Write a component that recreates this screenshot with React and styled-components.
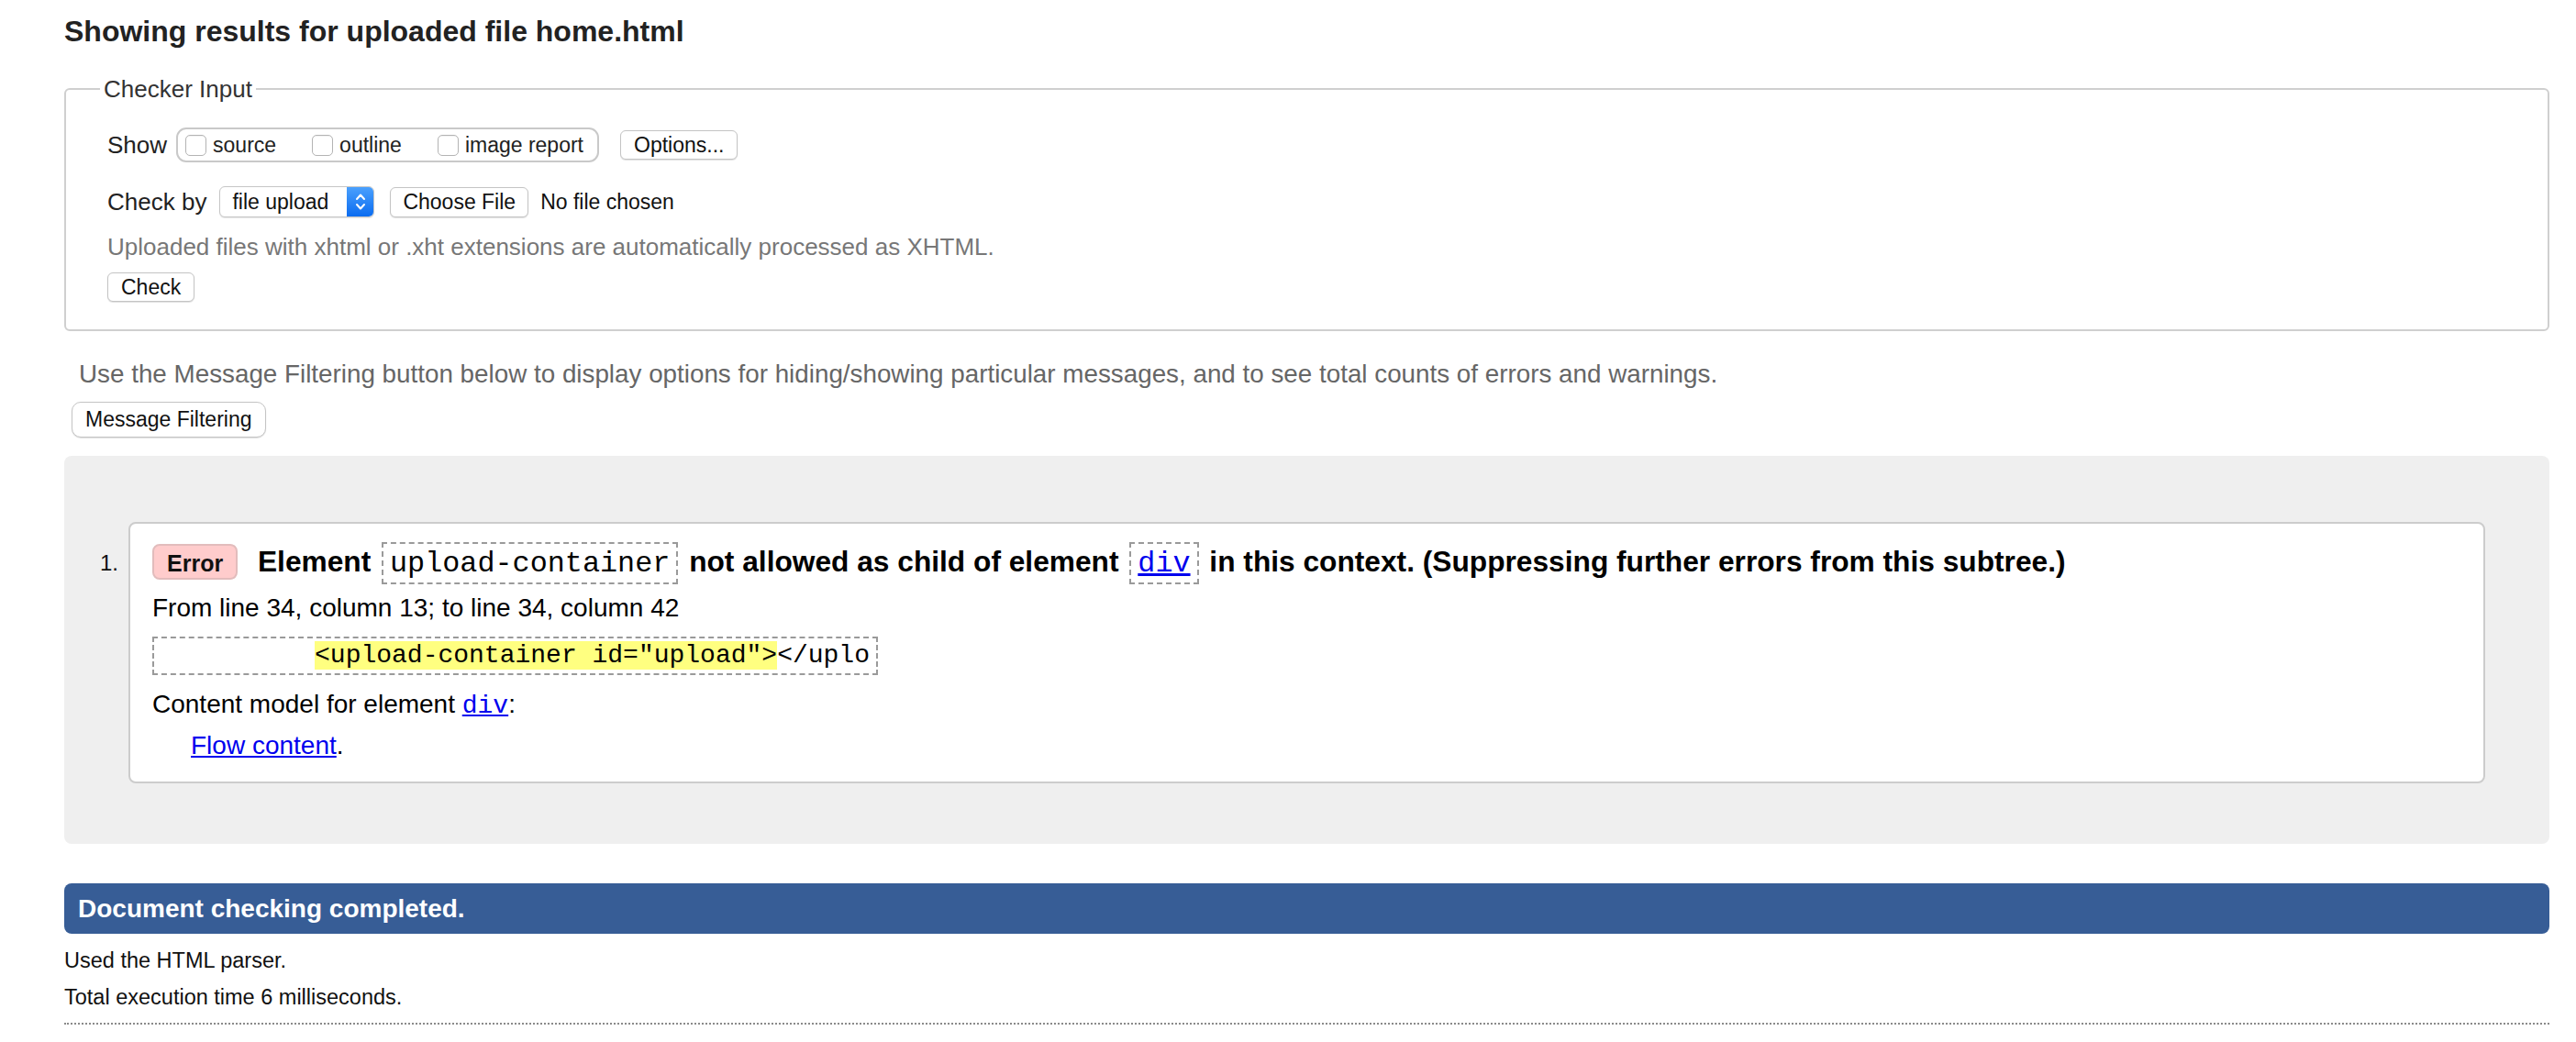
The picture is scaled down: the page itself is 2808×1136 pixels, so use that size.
import React from 'react';
import styled, { createGlobalStyle } from 'styled-components';

const GlobalStyle = createGlobalStyle`
  html, body {
    margin: 0;
    padding: 0;
    background: #fff;
  }
  body {
    font-family: "Liberation Sans", Arial, Helvetica, sans-serif;
    color: #111;
  }
`;

const Page = styled.div`
  padding: 0 29px 0 70px;
`;

const Title = styled.h2`
  margin: 15px 0 0;
  font-size: 32px;
  line-height: 38px;
  font-weight: bold;
  color: #222;
`;

const Fieldset = styled.fieldset`
  margin: 29px 0 0;
  padding: 27px 45px 30px;
  border: 2px solid #cfcfcf;
  border-radius: 6px;
  min-width: 0;
`;

const Legend = styled.legend`
  margin-left: -8px;
  padding: 0 4px;
  font-size: 26px;
  line-height: 30px;
  color: #333;
`;

const Row = styled.div`
  display: flex;
  align-items: center;
  height: ${(p) => p.h}px;
  margin-top: ${(p) => p.mt || 0}px;
`;

const Label = styled.span`
  font-size: 26px;
  color: #222;
  margin-right: ${(p) => p.mr || 0}px;
`;

const OptionGroup = styled.div`
  display: flex;
  align-items: center;
  box-sizing: border-box;
  height: 38px;
  padding: 0 15px 0 8px;
  border: 2px solid #c9c9c9;
  border-radius: 11px;
  gap: 39px;
`;

const CheckItem = styled.label`
  display: flex;
  align-items: center;
  gap: 7px;
  font-size: 23px;
  color: #222;
`;

const Box = styled.span`
  display: inline-block;
  box-sizing: border-box;
  width: 23px;
  height: 23px;
  border: 1.5px solid #b4b4b4;
  border-radius: 5px;
  background: #fff;
  box-shadow: inset 0 1px 1px rgba(0, 0, 0, 0.06);
`;

const Button = styled.button`
  box-sizing: border-box;
  height: ${(p) => p.h || 32}px;
  padding: 0 ${(p) => p.px || 14}px;
  margin-left: ${(p) => p.ml || 0}px;
  font-family: "Liberation Sans", Arial, Helvetica, sans-serif;
  font-size: 23px;
  color: #111;
  background: #fff;
  border: 1px solid #c4c4c4;
  border-radius: ${(p) => p.r || 6}px;
  box-shadow: 0 1px 1px rgba(0, 0, 0, 0.12);
`;

const Select = styled.div`
  display: flex;
  box-sizing: border-box;
  width: 169px;
  height: 34px;
  border: 1px solid #c6c6c6;
  border-radius: 6px;
  background: #fff;
  overflow: hidden;
  box-shadow: 0 1px 1px rgba(0, 0, 0, 0.1);
`;

const SelectText = styled.span`
  flex: 1;
  padding-left: 13px;
  font-size: 23px;
  line-height: 32px;
  color: #111;
`;

const Stepper = styled.span`
  display: flex;
  align-items: center;
  justify-content: center;
  width: 29px;
  background: linear-gradient(#4aa0fd, #0b6cf0);
`;

const FileName = styled.span`
  margin-left: 13px;
  font-size: 23px;
  color: #111;
`;

const Hint = styled.div`
  margin-top: 17px;
  font-size: 26px;
  line-height: 30px;
  color: #777;
`;

const Note = styled.p`
  margin: 30px 0 0 16px;
  font-size: 27.8px;
  line-height: 34px;
  color: #666;
`;

const FilterBar = styled.div`
  margin: 13px 0 0 8px;
`;

const Results = styled.div`
  margin-top: 20px;
  padding: 72px 70px 66px 0;
  background: #efefef;
  border-radius: 8px;
`;

const Item = styled.div`
  display: flex;
  align-items: flex-start;
`;

const Marker = styled.span`
  box-sizing: border-box;
  width: 70px;
  padding-right: 11px;
  margin-top: 31px;
  text-align: right;
  font-size: 24px;
  line-height: 28px;
  color: #111;
`;

const Card = styled.div`
  flex: 1;
  padding: 19px 24px 21px;
  background: #fff;
  border: 2px solid #cccccc;
  border-radius: 8px;
`;

const Message = styled.p`
  margin: 0;
  font-size: 31.7px;
  line-height: 44px;
  font-weight: bold;
  color: #000;
`;

const Badge = styled.span`
  display: inline-block;
  padding: 5px 14px 2px;
  margin-right: 13px;
  font-size: 25px;
  line-height: 28px;
  font-weight: bold;
  color: #111;
  background: #fcc;
  border: 2px solid #e2bcbc;
  border-radius: 8px;
`;

const Code = styled.code`
  margin: 0 3px;
  padding: 4px 7px 2px;
  font-family: "Liberation Mono", "Courier New", monospace;
  font-size: 31.8px;
  font-weight: normal;
  line-height: 1;
  border: 2px dashed #9a9a9a;
`;

const Line = styled.p`
  margin: ${(p) => p.mt || 0}px 0 0;
  padding-left: ${(p) => p.indent || 0}px;
  font-size: 28px;
  line-height: 36px;
  color: #000;
`;

const Extract = styled.div`
  width: fit-content;
  margin-top: 13px;
  padding: 3px 7px;
  font-family: "Liberation Mono", "Courier New", monospace;
  font-size: 28px;
  line-height: 32px;
  white-space: pre;
  color: #000;
  border: 2px dashed #9a9a9a;
`;

const Mark = styled.mark`
  background: #ffff80;
  color: #000;
`;

const Link = styled.a`
  color: #0000ee;
  text-decoration: underline;
  font-family: ${(p) => (p.mono ? '"Liberation Mono", "Courier New", monospace' : 'inherit')};
`;

const Summary = styled.div`
  margin-top: 43px;
  height: 55px;
  padding-left: 15px;
  background: #375d96;
  border-radius: 8px;
  font-size: 28px;
  line-height: 55px;
  font-weight: bold;
  color: #fff;
`;

const Stats = styled.div`
  margin-top: 9px;
  font-size: 23.5px;
  line-height: 40px;
  color: #111;
`;

const Dotted = styled.div`
  margin-top: 8px;
  border-top: 2px dotted #8a8a8a;
`;

const Chevrons = () => (
  <svg width="14" height="22" viewBox="0 0 14 22" fill="none" stroke="#fff" strokeWidth="2" strokeLinecap="round" strokeLinejoin="round">
    <path d="M3 8 L7 3.5 L11 8" />
    <path d="M3 14 L7 18.5 L11 14" />
  </svg>
);

export default function App() {
  return (
    <>
      <GlobalStyle />
      <Page>
        <Title>Showing results for uploaded file home.html</Title>

        <Fieldset>
          <Legend>Checker Input</Legend>
          <Row h={38}>
            <Label mr={10}>Show</Label>
            <OptionGroup>
              <CheckItem><Box />source</CheckItem>
              <CheckItem><Box />outline</CheckItem>
              <CheckItem><Box />image report</CheckItem>
            </OptionGroup>
            <Button ml={23}>Options...</Button>
          </Row>
          <Row h={34} mt={26}>
            <Label mr={14}>Check by</Label>
            <Select>
              <SelectText>file upload</SelectText>
              <Stepper><Chevrons /></Stepper>
            </Select>
            <Button ml={17} h={33} px={13}>Choose File</Button>
            <FileName>No file chosen</FileName>
          </Row>
          <Hint>Uploaded files with xhtml or .xht extensions are automatically processed as XHTML.</Hint>
          <Row h={32} mt={13}>
            <Button>Check</Button>
          </Row>
        </Fieldset>

        <Note>
          Use the Message Filtering button below to display options for hiding/showing particular messages, and to see total counts of errors and warnings.
        </Note>
        <FilterBar>
          <Button h={39} r={10}>Message Filtering</Button>
        </FilterBar>

        <Results>
          <Item>
            <Marker>1.</Marker>
            <Card>
              <Message>
                <Badge>Error</Badge> Element <Code>upload-container</Code> not allowed as child of element{' '}
                <Code><Link mono href="#div">div</Link></Code> in this context. (Suppressing further errors from this subtree.)
              </Message>
              <Line mt={11}>From line 34, column 13; to line 34, column 42</Line>
              <Extract>{'          '}<Mark>{'<upload-container id="upload">'}</Mark>{'</uplo'}</Extract>
              <Line mt={14}>
                Content model for element <Link mono href="#div">div</Link>:
              </Line>
              <Line mt={7} indent={42}>
                <Link href="#flow">Flow content</Link>.
              </Line>
            </Card>
          </Item>
        </Results>

        <Summary>Document checking completed.</Summary>
        <Stats>
          <div>Used the HTML parser.</div>
          <div>Total execution time 6 milliseconds.</div>
        </Stats>
        <Dotted />
      </Page>
    </>
  );
}
